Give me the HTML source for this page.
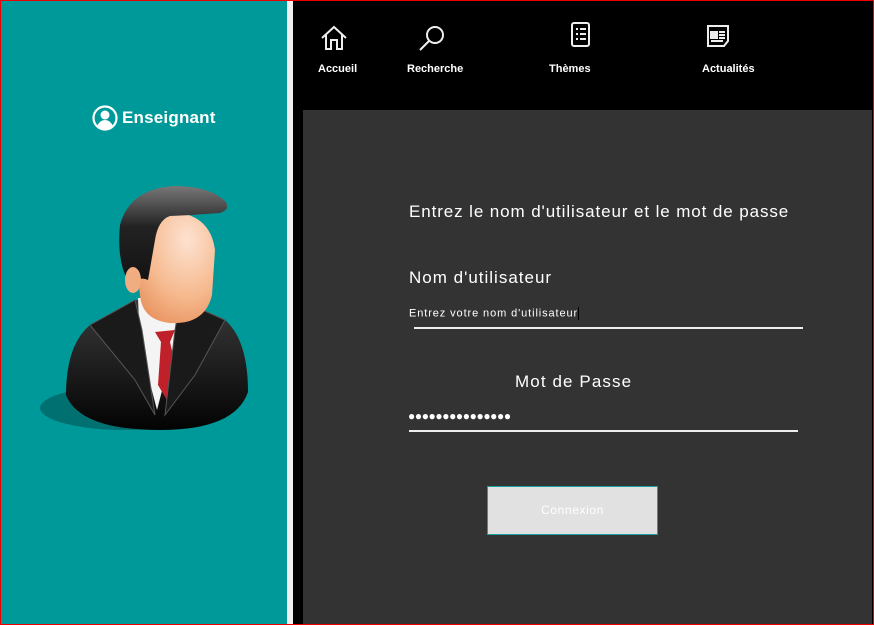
<!DOCTYPE html>
<html><head><meta charset="utf-8"><style>
*{margin:0;padding:0;box-sizing:border-box}
body{width:874px;height:625px;position:relative;overflow:hidden;background:#000;font-family:"Liberation Sans","DejaVu Sans",sans-serif}
.frame{position:absolute;inset:0;border:1px solid #e00;z-index:10;pointer-events:none}
.left{position:absolute;left:0;top:0;width:287px;height:625px;background:#009999}
.strip{position:absolute;left:287px;top:0;width:6px;height:625px;background:#f0f0f0}
.dark{position:absolute;left:303px;top:110px;width:569px;height:515px;background:#333}
.nav{position:absolute;color:#fff;font-weight:bold;font-size:11px;text-align:center}
.t{position:absolute;color:#fff;white-space:nowrap}
.line{position:absolute;height:2px;background:#eee}
</style></head><body>
<div class="left"></div>
<div class="strip"></div>
<div class="dark"></div>

<svg style="position:absolute;left:92px;top:105px" width="26" height="26" viewBox="0 0 26 26">
<circle cx="13" cy="13" r="11.5" fill="none" stroke="#fff" stroke-width="2.2"/>
<circle cx="13" cy="10" r="4.5" fill="#fff"/>
<path d="M5 21 Q8 15 13 15 Q18 15 21 21 Q17 25 13 25 Q9 25 5 21Z" fill="#fff"/>
</svg>
<div class="t" style="left:122px;top:108px;font-size:17px;font-weight:bold;letter-spacing:0.2px">Enseignant</div>

<svg style="position:absolute;left:30px;top:180px" width="240" height="260" viewBox="0 0 240 260">
<defs>
<radialGradient id="face" cx="0.65" cy="0.25" r="0.85"><stop offset="0" stop-color="#fde2d0"/><stop offset="0.6" stop-color="#f6b98e"/><stop offset="1" stop-color="#e8925e"/></radialGradient>
<linearGradient id="suit" x1="0" y1="0" x2="0" y2="1"><stop offset="0" stop-color="#3a3a3a"/><stop offset="1" stop-color="#030303"/></linearGradient>
<linearGradient id="hair" x1="0" y1="0" x2="0" y2="1"><stop offset="0" stop-color="#777"/><stop offset="0.4" stop-color="#222"/><stop offset="1" stop-color="#111"/></linearGradient>
</defs>
<ellipse cx="95" cy="228" rx="85" ry="22" fill="#006565" opacity="0.8"/>
<path d="M36 215 Q36 165 60 145 L105 120 L150 120 L195 140 Q218 160 218 212 Q205 250 130 250 Q50 250 36 215Z" fill="url(#suit)"/>
<path d="M108 118 L145 118 L155 150 L140 180 L127 230 L110 165 Z" fill="#f4f4f4"/>
<path d="M125 152 L145 150 L140 162 L150 205 L138 222 L128 205 L131 162Z" fill="#c0202a"/>
<path d="M60 145 L105 120 L112 150 L125 235 L105 200 Z" fill="#1a1a1a" stroke="#555" stroke-width="1"/>
<path d="M195 140 L150 120 L145 150 L135 235 L165 195 Z" fill="#1a1a1a" stroke="#555" stroke-width="1"/>
<path d="M140 143 Q112 140 110 115 L105 75 Q108 35 140 32 Q180 33 185 70 L182 115 Q175 145 140 143Z" fill="url(#face)"/>
<path d="M102 108 Q86 85 90 45 Q100 8 145 6 Q180 6 196 22 Q200 30 190 33 Q165 35 140 36 Q128 40 125 60 L118 100 Q108 95 102 108 Z" fill="url(#hair)"/>
<ellipse cx="103" cy="100" rx="8" ry="13" fill="#f0ad82"/>
</svg>

<svg style="position:absolute;left:320px;top:25px" width="28" height="26" viewBox="0 0 28 26" fill="none" stroke="#eee" stroke-width="2">
<path d="M2 13 L14 2 L26 13 M6 10 V24 H11 V15 H17 V24 H22 V10"/>
</svg>
<div class="nav" style="left:318px;top:63px">Accueil</div>
<svg style="position:absolute;left:418px;top:24px" width="30" height="28" viewBox="0 0 30 28" fill="none" stroke="#eee" stroke-width="2">
<circle cx="17" cy="11" r="8"/><path d="M11 17 L2 26"/>
</svg>
<div class="nav" style="left:407px;top:63px">Recherche</div>
<svg style="position:absolute;left:570px;top:22px" width="22" height="26" viewBox="0 0 22 26" fill="none" stroke="#eee" stroke-width="2">
<rect x="2" y="1" width="17" height="23" rx="2"/><path d="M6 7h2M10 7h6M6 12h2M10 12h6M6 17h2M10 17h6"/>
</svg>
<div class="nav" style="left:549px;top:63px">Thèmes</div>
<svg style="position:absolute;left:706px;top:24px" width="24" height="24" viewBox="0 0 24 24" fill="none" stroke="#eee" stroke-width="2">
<path d="M2 2 H22 V17 L18 22 H2 Z"/><rect x="5" y="8" width="6" height="6" fill="#eee"/><path d="M13 8h6M13 11h6M13 14h6M5 17h12"/>
</svg>
<div class="nav" style="left:702px;top:63px">Actualités</div>

<div class="t" style="left:409px;top:202px;font-size:17px;letter-spacing:0.9px">Entrez le nom d'utilisateur et le mot de passe</div>
<div class="t" style="left:409px;top:268px;font-size:17px;letter-spacing:1px">Nom d'utilisateur</div>
<div class="t" style="left:409px;top:307px;font-size:11px;letter-spacing:0.9px">Entrez votre nom d'utilisateur<span style="display:inline-block;width:1px;height:13px;background:#000;vertical-align:middle"></span></div>
<div class="line" style="left:414px;top:327px;width:389px"></div>
<div class="t" style="left:515px;top:372px;font-size:17px;letter-spacing:1.1px">Mot de Passe</div>
<div class="t" style="left:408px;top:409px;font-size:12px;letter-spacing:-0.4px;font-weight:bold">●●●●●●●●●●●●●●●</div>
<div class="line" style="left:409px;top:430px;width:389px"></div>
<div style="position:absolute;left:487px;top:486px;width:171px;height:49px;background:#e1e1e1;border:1px solid #1aa0a0;color:#fff;font-size:12px;letter-spacing:0.6px;text-align:center;line-height:47px">Connexion</div>
<div class="frame"></div>
</body></html>
